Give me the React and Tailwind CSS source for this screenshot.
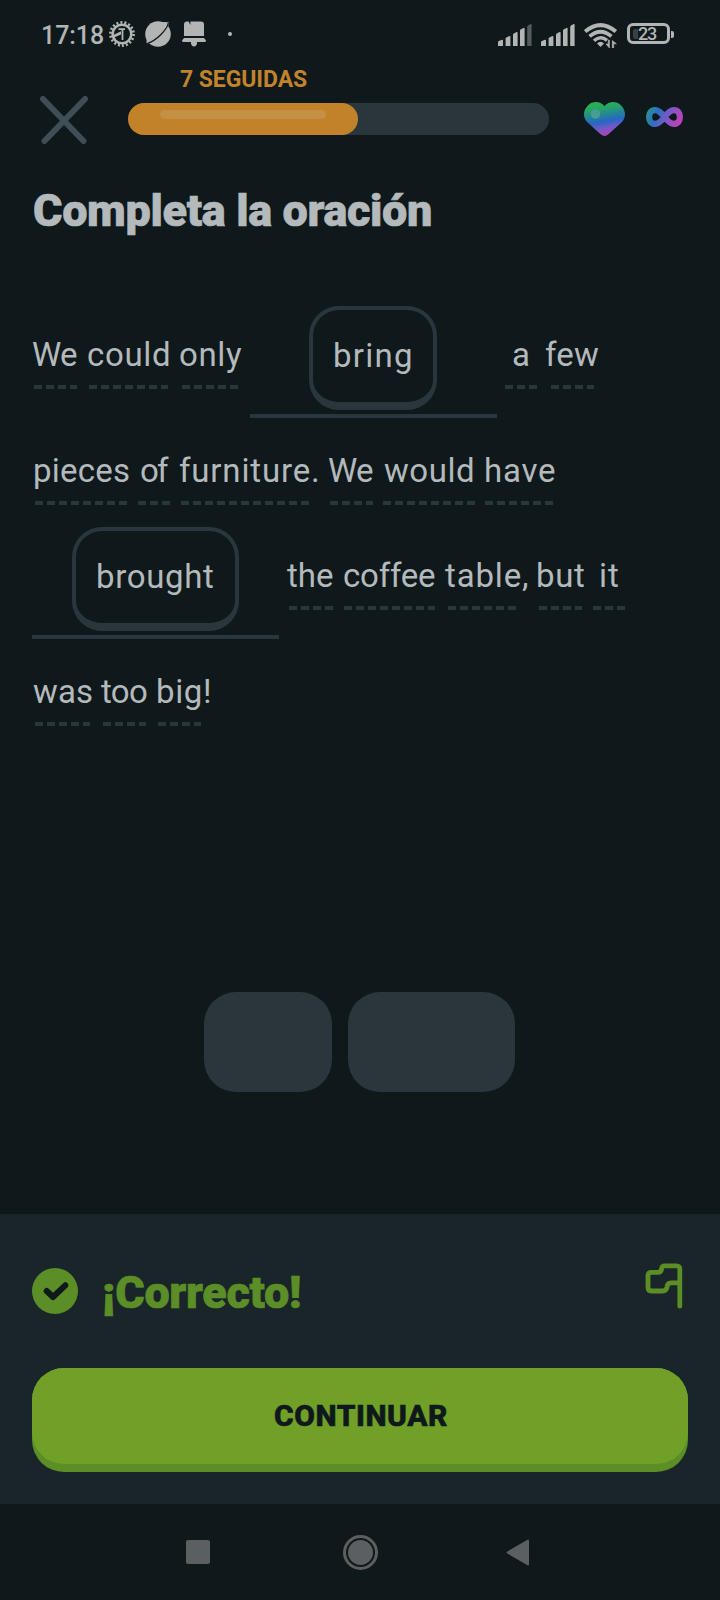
import { useLayoutEffect, useRef } from "react";

/* Sets a run of text so that its ink fills a given width, by adjusting tracking. */
function Fit({ children, width, className = "" }) {
  const ref = useRef(null);
  useLayoutEffect(() => {
    const el = ref.current;
    const cs = getComputedStyle(el);
    const ctx = document.createElement("canvas").getContext("2d");
    ctx.font = `${cs.fontWeight} ${cs.fontSize} ${cs.fontFamily}`;
    const m = ctx.measureText(children);
    const ink = m.actualBoundingBoxLeft + m.actualBoundingBoxRight;
    const n = children.length - 1;
    el.style.letterSpacing = n ? `${(width - ink) / n}px` : "0px";
    el.style.marginLeft = `${m.actualBoundingBoxLeft}px`;
  }, [children, width]);
  return (
    <span ref={ref} className={`block w-0 whitespace-nowrap ${className}`}>
      {children}
    </span>
  );
}

const dashes =
  "mt-[10px] block h-1 bg-[repeating-linear-gradient(90deg,#2b363c_0_8px,transparent_8px_12px)]";

function Word({ text, ink, box, dash }) {
  return (
    <span className={`block shrink-0 pt-[29px] ${box}`}>
      <Fit width={ink} className="leading-10">
        {text}
      </Fit>
      <span className={`${dashes} ${dash}`} />
    </span>
  );
}

function Blank({ text, ink, chip }) {
  return (
    <span className="flex h-28 w-[247px] shrink-0 flex-col border-b-4 border-[#2b363c]">
      <span
        className={`block h-[104px] rounded-[30px] border-4 border-b-8 border-[#2b363c] pt-[26px] pl-[22px] ${chip}`}
      >
        <Fit width={ink} className="leading-10">
          {text}
        </Fit>
      </span>
    </span>
  );
}

function Signal({ weak, className }) {
  return (
    <svg className={`h-[22px] w-[34px] ${className}`} viewBox="0 0 34 22" fill="#b3b4b4">
      <path d="M0 18.2Q0 17.4 .8 17L4 15.8Q5 15.6 5 16.6V22H0Z" />
      <path d="M7.6 14.6Q7.6 13.8 8.4 13.4L11.4 12Q12.4 11.8 12.4 12.8V22H7.6Z" />
      <path d="M15 11Q15 10 15.8 9.6L18.6 8.1Q19.6 7.8 19.6 8.8V22H15Z" />
      <path d="M22 6.6Q22 5.8 22.8 5.2L25.6 3.9Q26.6 3.6 26.6 4.6V22H22Z" />
      <path
        d="M29.2 2.8Q29.2 2 30 1.4L32.6.1Q33.6-.2 33.6.8V22H29.2Z"
        fill={weak ? "#555a5c" : "#b3b4b4"}
      />
    </svg>
  );
}

function StatusBar() {
  return (
    <div className="flex h-[68px] items-start pt-[21px] text-[#b3b4b4]">
      <div className="mt-px ml-[43px] w-[66px]">
        <Fit width={60} className="text-[25px] leading-[28px] font-medium">
          17:18
        </Fit>
      </div>
      <svg className="h-[26px] w-[26px]" viewBox="0 0 26 26" fill="none" stroke="#b3b4b4">
        <circle cx="13" cy="13" r="9.3" strokeWidth="2.6" />
        <circle cx="13" cy="13" r="11.6" strokeWidth="2.6" strokeDasharray="2 2.05" />
        <path d="M9.5 8.2H16M13.5 8.5V19" strokeWidth="1.8" />
        <path d="M3.5 14.5 12 10.3V13.5L5 16.5Z" fill="#b3b4b4" stroke="none" />
      </svg>
      <svg className="ml-[10px] h-[26px] w-[26px]" viewBox="0 0 26 26" fill="#b3b4b4">
        <circle cx="13" cy="13" r="12.8" />
        <path d="M15 1.8Q20 .3 23.8 1.6Q24 5 21.5 9ZM2.2 15 1.4 21.8Q3.5 23.2 8 21.5Z" />
        <path
          d="M23.3 2Q22.5 7 15.5 14Q9 20.3 2.5 22.4"
          fill="none"
          stroke="#0f181b"
          strokeWidth="1.3"
        />
      </svg>
      <svg className="ml-[11px] h-[26px] w-[24px]" viewBox="0 0 24 26" fill="#b3b4b4">
        <path d="M2 15V3.5Q2 .5 5 .5H6.6L8.4 4V.5H19Q22 .5 22 3.5V15Z" />
        <path d="M2 17H22L24 19.5Q24 21 22.5 21H15V23Q14 25.5 12 25.5Q10 25.5 9 23V21H1.5Q0 21 0 19.5Z" />
      </svg>
      <span className="mt-[11px] ml-[22px] h-1 w-1 rounded-full bg-[#b3b4b4]" />
      <Signal weak className="mt-[3px] ml-[266px]" />
      <Signal className="mt-[3px] ml-[9px]" />
      <svg
        className="mt-[1px] ml-[9px] h-[26px] w-[34px]"
        viewBox="0 0 34 26"
        fill="none"
        stroke="#b3b4b4"
      >
        <path d="M1.2 9.6Q16.5-3.4 31.800 9.600" strokeWidth="4" />
        <path d="M5.6 14.400Q16.500 5 27.400 14.400" strokeWidth="3.800" />
        <path d="M10 18.800Q16.500 13 23 18.400" strokeWidth="3.500" />
        <path d="M13 21.600Q16.500 18 20 21.600L16.500 25Z" fill="#b3b4b4" stroke="none" />
        <path
          d="M25.400 18V26L22 22H24.200V18ZM28.300 26V18.500L32.400 21.800H29.700V26Z"
          fill="#b3b4b4"
          stroke="#b3b4b4"
          strokeWidth=".6"
        />
      </svg>
      <div className="mt-[2px] ml-[9px] flex h-[21px] w-[43px] items-center rounded-[6px] border-3 border-[#b3b4b4]">
        <span className="ml-[3px] h-[10px] w-[5px] rounded-l-[2px] bg-[#3a4043]" />
        <Fit width={19} className="text-[18px] leading-[18px] font-medium">
          23
        </Fit>
      </div>
      <span className="mt-[10px] ml-[1px] h-[7px] w-[3px] rounded-r-[2px] bg-[#b3b4b4]" />
    </div>
  );
}

function Header() {
  return (
    <div className="flex h-[92px] items-start">
      <svg
        className="mt-[27px] ml-[40px] h-[50px] w-[48px]"
        viewBox="0 0 48 50"
        stroke="#404d55"
        strokeWidth="6"
        strokeLinecap="round"
      >
        <path d="M3 4 43.500 46M45 4 4.500 46" />
      </svg>
      <div className="ml-[40px] w-[421px]">
        <div className="h-[35px] pt-px pl-[52px] text-[#c1832b]">
          <Fit width={127} className="text-[23px] leading-[22px] font-bold">
            7 SEGUIDAS
          </Fit>
        </div>
        <div className="h-8 rounded-full bg-[#2b363c]">
          <div className="h-8 w-[230px] rounded-full bg-[#c18229] pt-[7px]">
            <div className="ml-8 h-[9px] w-[166px] rounded-full bg-[#c49046]" />
          </div>
        </div>
      </div>
      <svg className="mt-[34px] ml-[35px] h-[34px] w-[41px]" viewBox="0 0 41 34">
        <defs>
          <linearGradient id="heart" x1="0.3" y1="0" x2="0.52" y2="1">
            <stop offset="0" stopColor="#2db04c" />
            <stop offset=".2" stopColor="#25a564" />
            <stop offset=".58" stopColor="#2468c4" />
            <stop offset=".78" stopColor="#7359c5" />
            <stop offset="1" stopColor="#b43fb8" />
          </linearGradient>
        </defs>
        <path
          d="M20.500 4.200C16-1.200 8.500-1 4 3.400C-1.400 8.500-1 16 3.300 20.300L16.600 32.300Q20.500 35.600 24.400 32.300L37.700 20.300C42 16 42.400 8.500 37 3.400C32.500-1 25-1.200 20.500 4.200Z"
          fill="url(#heart)"
        />
        <circle cx="11.500" cy="12" r="4.700" fill="#4a9d94" />
      </svg>
      <svg className="mt-[39px] ml-[21px] h-[20px] w-[37px]" viewBox="0 0 37 20">
        <defs>
          <linearGradient
            id="loop"
            x1="0"
            y1="2"
            x2="35"
            y2="18"
            gradientUnits="userSpaceOnUse"
          >
            <stop offset="0" stopColor="#259c83" />
            <stop offset=".3" stopColor="#2c6fc4" />
            <stop offset=".6" stopColor="#7a58c6" />
            <stop offset="1" stopColor="#c83db8" />
          </linearGradient>
        </defs>
        <path
          d="M18.500 10C15.500 6 12.500 3.100 9 3.100C5.300 3.100 3.100 6 3.100 10S5.300 16.900 9 16.900C12.500 16.900 15.500 14 18.500 10S24.500 3.100 28 3.100C31.700 3.100 33.900 6 33.900 10S31.700 16.900 28 16.900C24.500 16.900 21.500 14 18.500 10Z"
          fill="none"
          stroke="url(#loop)"
          strokeWidth="6.200"
        />
      </svg>
    </div>
  );
}

function Sentence() {
  return (
    <div className="h-[686px] pl-8 text-[33px] text-[#b4b9bc]">
      <div className="flex h-[116px]">
        <Word text="We" ink={45} box="w-14" dash="ml-[2px] w-[43px]" />
        <Word text="could" ink={81} box="w-[92px]" dash="ml-px w-[79px]" />
        <Word text="only" ink={62} box="w-[70px]" dash="ml-[2px] w-[56px]" />
        <Blank text="bring" ink={76} chip="ml-[59px] w-32" />
        <Word text="a" ink={16} box="ml-4 w-[32px]" dash="-ml-2 w-8" />
        <Word text="few" ink={54} box="w-[54px]" dash="ml-[6px] w-[43px]" />
      </div>
      <div className="flex h-[105px]">
        <Word text="pieces" ink={94} box="ml-[3px] w-[106px]" dash="w-[92px]" />
        <Word text="of" ink={28} box="w-[38px]" dash="-ml-[3px] w-8" />
        <Word text="furniture." ink={139} box="w-[149px]" dash="ml-[2px] w-32" />
        <Word text="We" ink={45} box="w-14" dash="ml-[2px] w-[43px]" />
        <Word text="would" ink={89} box="w-[102px]" dash="-ml-px w-[92px]" />
        <Word text="have" ink={69} box="w-[69px]" dash="-ml-px w-[68px]" />
      </div>
      <div className="flex h-[116px]">
        <Blank text="brought" ink={115} chip="ml-10 w-[167px]" />
        <Word text="the" ink={46} box="ml-2 w-[57px]" dash="ml-[2px] w-11" />
        <Word text="coffee" ink={91} box="w-[101px]" dash="w-[91px]" />
        <Word text="table," ink={82} box="w-[93px]" dash="ml-[3px] w-[68px]" />
        <Word text="but" ink={46} box="w-[63px]" dash="ml-px w-[43px]" />
        <Word text="it" ink={17} box="w-[17px]" dash="-ml-2 w-8" />
      </div>
      <div className="flex">
        <Word text="was" ink={59} box="ml-px w-[68px]" dash="ml-[2px] w-[55px]" />
        <Word text="too" ink={46} box="w-[57px]" dash="ml-[2px] w-[43px]" />
        <Word text="big!" ink={52} box="w-[52px]" dash="w-[43px]" />
      </div>
    </div>
  );
}

function ResultPanel() {
  return (
    <div className="h-[290px] bg-[#1a252a] px-8">
      <div className="flex h-[154px] items-start">
        <svg className="mt-[54px] h-[46px] w-[46px]" viewBox="0 0 46 46" fill="none">
          <circle cx="23" cy="23" r="23" fill="#5c8e28" />
          <path
            d="M14.700 23 21 29 33.300 17.300"
            stroke="#0f181b"
            strokeWidth="6"
            strokeLinecap="round"
            strokeLinejoin="round"
          />
        </svg>
        <div className="mt-[51px] ml-[26px] flex-1 text-[#5c8e28]">
          <Fit
            width={196}
            className="text-[45px] leading-[56px] font-black [-webkit-text-stroke:0.6px_currentColor]"
          >
            ¡Correcto!
          </Fit>
        </div>
        <svg
          className="mt-[49px] mr-[5px] h-[46px] w-[38px]"
          viewBox="0 0 38 46"
          fill="none"
          stroke="#5c8e28"
          strokeWidth="4.800"
          strokeLinecap="round"
          strokeLinejoin="round"
        >
          <path d="M34.800 43.200V6Q34.800 2.800 31.600 2.800H20Q16.800 2.800 16.500 6Q16.200 9.300 13 9.300H6.500Q3 9.300 3 12.500V24.500Q3 28 6.500 28H17.500Q21.500 28 22 24Q22.300 20 26 19.800H34" />
        </svg>
      </div>
      <div className="h-[104px] rounded-[32px] bg-[#5c8e28]">
        <div className="h-24 rounded-[32px] bg-[#70a028] pt-[26px] pl-[243px] text-[#0f181b]">
          <Fit
            width={172}
            className="text-[30px] leading-[44px] font-extrabold [-webkit-text-stroke:0.6px_currentColor]"
          >
            CONTINUAR
          </Fit>
        </div>
      </div>
    </div>
  );
}

function NavBar() {
  return (
    <div className="flex h-24 items-start">
      <span className="mt-[36px] ml-[186px] h-6 w-6 rounded-[2px] bg-[#5c5f61]" />
      <span className="mt-[31px] ml-[133px] flex h-[35px] w-[35px] items-center justify-center rounded-full border-[3px] border-[#5c5f61]">
        <span className="h-[25px] w-[25px] shrink-0 rounded-full bg-[#5c5f61]" />
      </span>
      <svg
        className="mt-[35px] ml-[128px] h-[27px] w-[23px]"
        viewBox="0 0 23 27"
        fill="#5c5f61"
        stroke="#5c5f61"
        strokeWidth="2"
        strokeLinejoin="round"
      >
        <path d="M1.500 13.500 22 1.500V25.500Z" />
      </svg>
    </div>
  );
}

export default function App() {
  return (
    <div className="flex h-[1600px] w-[720px] flex-col overflow-hidden bg-[#0f181b] font-['Roboto','Liberation_Sans',sans-serif]">
      <StatusBar />
      <Header />
      <h1 className="h-[146px] pt-[23px] pl-[34px] text-[#b4b9bc]">
        <Fit
          width={397}
          className="text-[45px] leading-[56px] font-black [-webkit-text-stroke:0.6px_currentColor]"
        >
          Completa la oración
        </Fit>
      </h1>
      <Sentence />
      <div className="flex h-[222px] gap-4 pl-[204px]">
        <span className="h-[100px] w-32 rounded-[32px] bg-[#2b363c]" />
        <span className="h-[100px] w-[167px] rounded-[32px] bg-[#2b363c]" />
      </div>
      <ResultPanel />
      <NavBar />
    </div>
  );
}
